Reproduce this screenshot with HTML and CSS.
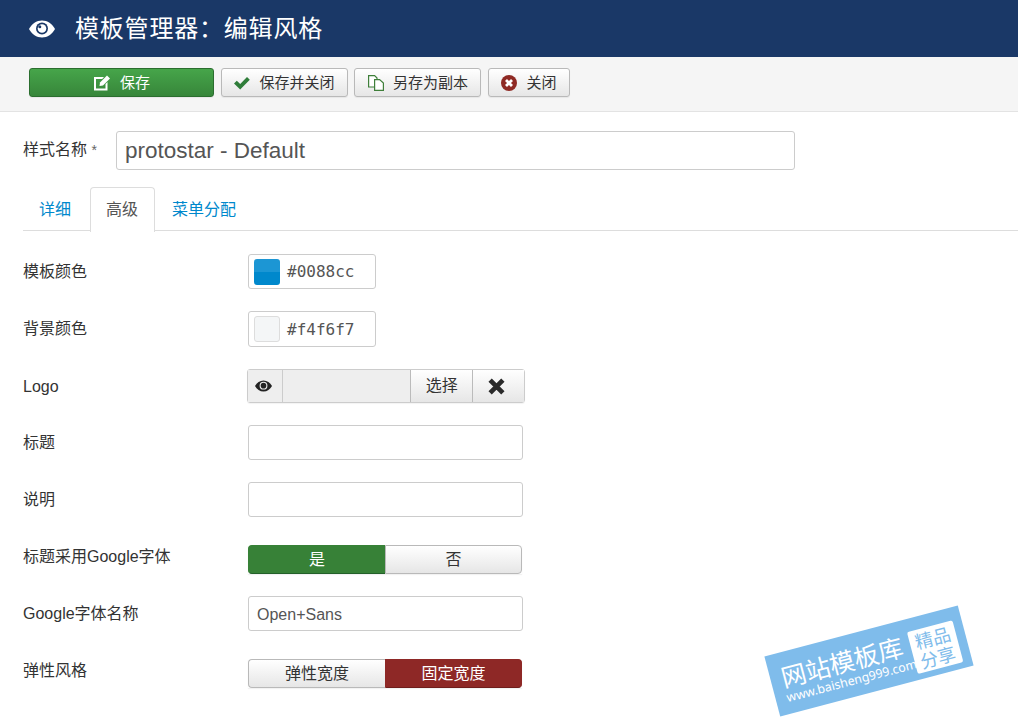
FILE: index.html
```html
<!DOCTYPE html>
<html lang="zh">
<head>
<meta charset="utf-8">
<title>模板管理器：编辑风格</title>
<link rel="stylesheet" href="styles.css">
</head>
<body>
<header class="topbar">
  <svg class="topbar-eye" viewBox="0 0 26 18"><path fill="#fff" d="M13 .5C7.500.5 2.800 3.800 0 9c2.800 5.200 7.500 8.500 13 8.500S23.200 14.200 26 9C23.200 3.800 18.500.5 13 .5z"/><circle cx="13" cy="8.500" r="6" fill="#1a3867"/><circle cx="13" cy="8.500" r="4.300" fill="#fff"/><circle cx="10.800" cy="6.800" r="1.500" fill="#1a3867"/></svg>
  <h1 class="page-title">模板管理器：编辑风格</h1>
</header>
<nav class="toolbar">
  <button class="btn btn-save"><svg class="ico" viewBox="0 0 16 16"><path fill="#fff" d="M0 2h10L8.200 4H2v9.500h9.500V9l2-2v8.500H0z"/><path fill="#fff" d="M13 .5 16 3.500 9 10.500 5.500 11 6 7.500z"/></svg>保存</button>
  <button class="btn btn-w1"><svg class="ico" viewBox="0 0 16 16"><path fill="#2f7d3a" d="M0 8.500 2.800 5.700 6.200 9 13 2 15.800 4.800 6.200 14.500z"/></svg>保存并关闭</button>
  <button class="btn btn-w1 btn-copy"><svg class="ico" viewBox="0 0 16 16"><path fill="#fff" stroke="#3f7f3a" stroke-width="1.200" d="M.6.600h6l2.400 2.400v9H.6z"/><path fill="#fff" stroke="#3f7f3a" stroke-width="1.200" d="M6.600 4.600h5l3.800 3.400v7.400H6.600z"/></svg>另存为副本</button>
  <button class="btn btn-close"><svg class="ico" viewBox="0 0 16 16"><circle cx="8" cy="8" r="8" fill="#8f2a24"/><path stroke="#fff" stroke-width="2.800" d="M5 5l6 6M11 5l-6 6"/></svg>关闭</button>
</nav>
<main class="content">
  <div class="name-row">
    <label class="name-label">样式名称 <span class="star">*</span></label>
    <input class="name-input" value="protostar - Default">
  </div>
  <ul class="tabs">
    <li class="tab">详细</li>
    <li class="tab active">高级</li>
    <li class="tab">菜单分配</li>
  </ul>
  <div class="form">
    <div class="row r1"><label>模板颜色</label>
      <div class="color-box"><span class="swatch blue"></span><span class="code">#0088cc</span></div></div>
    <div class="row r2"><label>背景颜色</label>
      <div class="color-box"><span class="swatch pale"></span><span class="code">#f4f6f7</span></div></div>
    <div class="row r3"><label>Logo</label>
      <div class="media">
        <span class="media-eye"><svg viewBox="0 0 26 18"><path fill="#222" d="M13 .5C7.500.5 2.800 3.800 0 9c2.800 5.200 7.500 8.500 13 8.500S23.200 14.200 26 9C23.200 3.800 18.500.5 13 .5z"/><circle cx="13" cy="8.500" r="6" fill="#eee"/><circle cx="13" cy="8.500" r="4.300" fill="#222"/></svg></span>
        <span class="media-field"></span>
        <span class="media-btn pick">选择</span>
        <span class="media-btn clear"><svg viewBox="0 0 16 16"><path stroke="#2a2a2a" stroke-width="4.400" d="M2 2l12 12M14 2 2 14"/></svg></span>
      </div></div>
    <div class="row r4"><label>标题</label><input class="text"></div>
    <div class="row r5"><label>说明</label><input class="text"></div>
    <div class="row r6"><label>标题采用Google字体</label>
      <div class="toggle"><span class="opt first on-green">是</span><span class="opt last">否</span></div></div>
    <div class="row r7"><label>Google字体名称</label><input class="text" value="Open+Sans"></div>
    <div class="row r8"><label>弹性风格</label>
      <div class="toggle"><span class="opt first">弹性宽度</span><span class="opt last on-red">固定宽度</span></div></div>
  </div>
</main>
<aside class="stamp">
  <div class="stamp-text"><div class="stamp-name">网站模板库</div><div class="stamp-url">www.baisheng999.com</div></div>
  <div class="stamp-tag">精品<br>分享</div>
</aside>
</body>
</html>
```
FILE: styles.css
```css
* { box-sizing: border-box; }
html, body { margin: 0; height: 723px; overflow: hidden; }
body { position: relative; background: #fff; color: #333; font: 16px/20px "Liberation Sans", "Noto Sans CJK SC", sans-serif; }
.topbar { height: 57px; background: #1a3867; display: flex; align-items: center; padding-left: 29px; }
.topbar-eye { width: 26px; height: 18px; margin-right: 20px; }
.page-title { margin: 0; font: 400 24px/30px "Liberation Sans", "Noto Sans CJK SC", sans-serif; color: #fff; letter-spacing: .8px; }
.toolbar { height: 55px; background: #f5f5f5; border-bottom: 1px solid #e3e3e3; padding: 11px 0 0 29px; display: flex; gap: 7px; align-items: flex-start; }
.btn { height: 29px; padding: 0; border: 1px solid #b9b9b9; border-radius: 3px; background: linear-gradient(#fff, #e6e6e6); color: #333; font: 15px/20px "Liberation Sans", "Noto Sans CJK SC", sans-serif; display: flex; align-items: center; justify-content: center; box-shadow: 0 1px 1px rgba(0,0,0,.06); }
.ico { width: 16px; height: 16px; margin-right: 9px; }
.btn-save { width: 185px; background: linear-gradient(#46a54a, #37863a); border-color: #2b6e2f; color: #fff; padding-left: 1px; }
.btn-save .ico { margin-right: 10px; }
.btn-w1 { width: 127px; }
.btn-copy { margin-left: -1px; padding-left: 1px; }
.btn-close { width: 82px; }
.content { padding: 19px 0 0 23px; }
.name-row { display: flex; align-items: center; height: 39px; }
.name-label { width: 93px; margin-top: -2px; }
.star { color: #666; font-size: 14px; }
.name-input { width: 679px; height: 39px; border: 1px solid #ccc; border-radius: 3px; padding: 0 8px; font: 22.500px "Liberation Sans", sans-serif; color: #555; }
.tabs { list-style: none; margin: 17px 0 0; padding: 0; height: 44px; display: flex; border-bottom: 1px solid #ddd; }
.tab { height: 44px; padding: 11px 15px 0; margin-right: 2px; color: #0088cc; font-size: 16px; line-height: 22px; border: 1px solid transparent; border-bottom: 0; }
.tab:first-child { margin-right: 3px; }
.tab.active { color: #555; background: #fff; border-color: #ddd; border-radius: 4px 4px 0 0; position: relative; z-index: 1; height: 45px; margin: 0 1px -1px 0; padding-right: 16px; }
.form { padding-top: 23px; }
.row { display: flex; align-items: flex-start; }
.row label { width: 225px; padding-top: 8px; }
.r1 { height: 57px; } .r2 { height: 58px; } .r3 { height: 56px; } .r4 { height: 57px; }
.r5 { height: 63px; } .r6 { height: 51px; } .r7 { height: 63px; }
.r6 label { padding-top: 2px; }
.r8 label { padding-top: 2px; }
.color-box { width: 128px; height: 35px; border: 1px solid #ccc; border-radius: 3px; display: flex; align-items: center; padding-left: 5px; }
.r2 .color-box { height: 36px; }
.swatch { width: 26px; height: 26px; border-radius: 3px; margin-right: 7px; }
.swatch.blue { background: linear-gradient(#1c96d4 50%, #0088cc 50%); }
.swatch.pale { background: #f4f6f7; border: 1px solid #ddd; }
.code { font: 16px "DejaVu Sans Mono", monospace; color: #555; }
.media { width: 278px; height: 34px; margin-left: -1px; display: flex; border: 1px solid #ccc; border-radius: 3px; box-shadow: 0 1px 1px rgba(0,0,0,.05); }
.media-eye { width: 35px; background: #eee; border-right: 1px solid #ccc; display: flex; align-items: center; justify-content: center; padding-right: 3px; }
.media-eye svg { width: 17px; height: 12px; }
.media-field { width: 128px; background: #eee; }
.media-btn { background: linear-gradient(#fff, #e6e6e6); border-left: 1px solid #bbb; display: flex; align-items: center; justify-content: center; font-size: 16px; color: #333; }
.pick { width: 62px; }
.clear { width: 52px; padding-right: 4px; }
.clear svg { width: 17px; height: 17px; }
.text { width: 275px; height: 35px; border: 1px solid #ccc; border-radius: 3px; padding: 2px 8px 0; font: 16px "Liberation Sans", sans-serif; color: #555; }
.toggle { width: 274px; height: 29px; display: flex; box-shadow: 0 1px 1px rgba(0,0,0,.05); }
.opt { flex: 0 0 50%; display: flex; align-items: center; justify-content: center; font-size: 16px; line-height: 20px; background: linear-gradient(#fff, #e6e6e6); color: #333; border: 1px solid #b9b9b9; }
.first { border-radius: 4px 0 0 4px; border-right: 0; }
.last { border-radius: 0 4px 4px 0; }
.on-green { background: #378137; border-color: #378137 #378137 #23602a; color: #fff; }
.on-red { background: #8e2826; border-color: #8e2826 #8e2826 #6f1d1b; color: #fff; }
.stamp { position: absolute; left: 769px; top: 630px; width: 200px; height: 62px; background: #7fbceb; transform: rotate(-14.800deg); color: #fff; display: flex; align-items: center; padding-left: 11px; }
.stamp-text { width: 133px; }
.stamp-name { font: 400 25px/30px "Noto Sans CJK SC", sans-serif; white-space: nowrap; }
.stamp-url { font: 12.300px/14px "Noto Sans", sans-serif; white-space: nowrap; }
.stamp-tag { width: 47px; height: 43px; margin-top: 6px; background: #fff; color: #7fbceb; border-radius: 2px; font: 400 18px/20px "Noto Sans CJK SC", sans-serif; text-align: center; padding-top: 1px; }
```
